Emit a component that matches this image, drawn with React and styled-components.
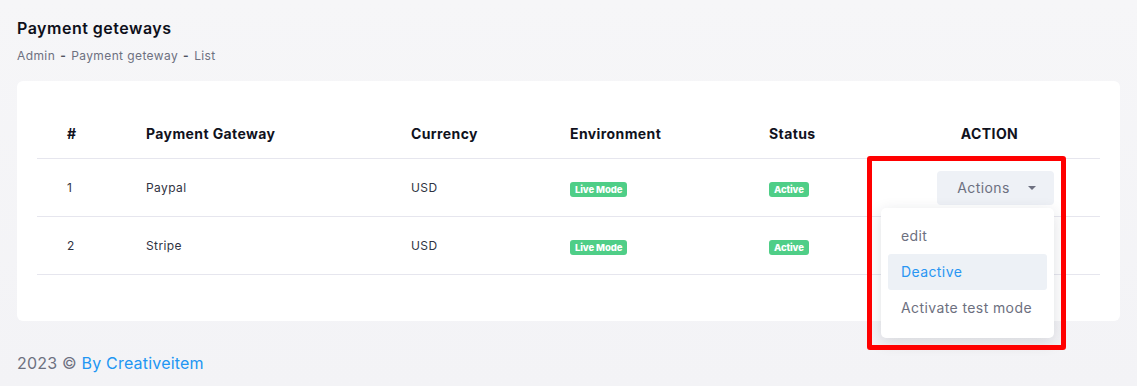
import React from "react";
import styled, { createGlobalStyle } from "styled-components";

const GlobalStyle = createGlobalStyle`
  body {
    margin: 0;
    background: #f4f4f7;
    font-family: Inter, "Open Sans", sans-serif;
    letter-spacing: 0.4px;
  }
`;

const Page = styled.div`
  padding: 17px 17px 0 17px;
  height: 386px;
  box-sizing: border-box;
  background: linear-gradient(180deg, #f6f6f8 0%, #f3f3f6 100%);
`;

const Title = styled.h1`
  margin: 0;
  font-size: 16px;
  line-height: 22px;
  font-weight: 600;
  color: #0e101b;
  letter-spacing: 0.5px;
`;

const Crumbs = styled.div`
  margin-top: 8px;
  font-size: 12px;
  line-height: 18px;
  color: #6d7080;
  display: flex;
  gap: 5px;
`;

const Dash = styled.span`
  font-weight: 700;
  color: #50535f;
`;

const Card = styled.div`
  margin-top: 16px;
  background: #fff;
  border-radius: 6px;
  padding: 27px 20px 46px 20px;
`;

const Row = styled.div`
  display: grid;
  grid-template-columns: 79px 265px 159px 199px 140px 1fr;
  align-items: center;
  height: ${(p) => (p.head ? "50px" : "57px")};
  border-bottom: 1px solid #e6e6ee;
`;

const Cell = styled.div`
  padding-left: ${(p) => (p.center ? "0" : "30px")};
  font-size: ${(p) => (p.head ? "14px" : "12px")};
  font-weight: ${(p) => (p.head ? 700 : 400)};
  color: ${(p) => (p.head ? "#10121d" : "#303342")};
  display: flex;
  justify-content: ${(p) => (p.center ? "center" : "flex-start")};
`;

const Badge = styled.span`
  margin-top: 3px;
  background: #4fce87;
  color: #fff;
  font-size: 9.5px;
  font-weight: 800;
  line-height: 15px;
  padding: 0 5px;
  border-radius: 3px;
  letter-spacing: -0.1px;
`;

const ActionWrap = styled.div`
  position: relative;
  margin-left: 28px;
`;

const ActionButton = styled.div`
  width: 117px;
  height: 34px;
  box-sizing: border-box;
  background: #eef1f6;
  border-radius: 4px;
  display: flex;
  align-items: center;
  justify-content: center;
  gap: 18px;
  font-size: 14px;
  color: #6d7080;
  padding-left: 2px;
`;

const Caret = styled.span`
  width: 0;
  height: 0;
  border-left: 4px solid transparent;
  border-right: 4px solid transparent;
  border-top: 4px solid #6d7080;
`;

const Menu = styled.div`
  position: absolute;
  top: 37px;
  right: 0;
  width: 173px;
  background: #fff;
  border-radius: 5px;
  box-shadow: 0 4px 16px rgba(30, 35, 60, 0.14);
  padding: 10px 7px 12px 7px;
  box-sizing: border-box;
  z-index: 2;
`;

const MenuItem = styled.div`
  height: 36px;
  display: flex;
  align-items: center;
  padding-left: 13px;
  font-size: 14px;
  border-radius: 3px;
  color: ${(p) => (p.active ? "#2996f3" : "#6d7080")};
  background: ${(p) => (p.active ? "#edf1f6" : "transparent")};
`;

const Highlight = styled.div`
  position: absolute;
  left: -70px;
  top: -15px;
  width: 199px;
  height: 194px;
  box-sizing: border-box;
  border: 5px solid #ff0000;
  border-radius: 3px;
  z-index: 3;
  pointer-events: none;
`;

const Footer = styled.div`
  margin-top: 32px;
  font-size: 16px;
  color: #6d7080;
  letter-spacing: 0.2px;
`;

const Link = styled.span`
  color: #2196f3;
`;

const gateways = [
  { id: 1, name: "Paypal", currency: "USD" },
  { id: 2, name: "Stripe", currency: "USD" },
];

export default function App() {
  return (
    <>
      <GlobalStyle />
      <Page>
        <Title>Payment geteways</Title>
        <Crumbs>
          <span>Admin</span>
          <Dash>-</Dash>
          <span>Payment geteway</span>
          <Dash>-</Dash>
          <span>List</span>
        </Crumbs>
        <Card>
          <Row head>
            <Cell head>#</Cell>
            <Cell head>Payment Gateway</Cell>
            <Cell head>Currency</Cell>
            <Cell head>Environment</Cell>
            <Cell head>Status</Cell>
            <Cell head center>ACTION</Cell>
          </Row>
          {gateways.map((g) => (
            <Row key={g.id}>
              <Cell>{g.id}</Cell>
              <Cell>{g.name}</Cell>
              <Cell>{g.currency}</Cell>
              <Cell>
                <Badge>Live Mode</Badge>
              </Cell>
              <Cell>
                <Badge>Active</Badge>
              </Cell>
              <Cell>
                {g.id === 1 && (
                  <ActionWrap>
                    <ActionButton>
                      Actions <Caret />
                    </ActionButton>
                    <Menu>
                      <MenuItem>edit</MenuItem>
                      <MenuItem active>Deactive</MenuItem>
                      <MenuItem>Activate test mode</MenuItem>
                    </Menu>
                    <Highlight />
                  </ActionWrap>
                )}
              </Cell>
            </Row>
          ))}
        </Card>
        <Footer>
          2023 © <Link>By Creativeitem</Link>
        </Footer>
      </Page>
    </>
  );
}
